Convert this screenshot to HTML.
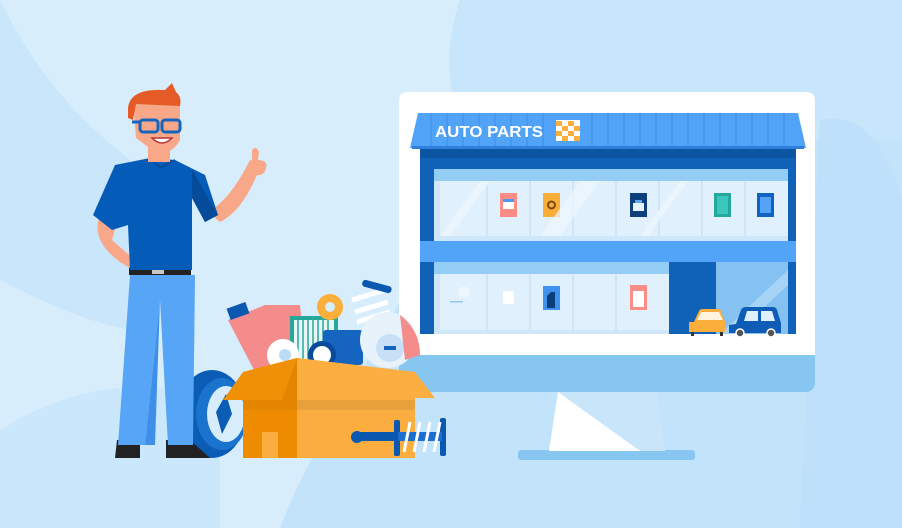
<!DOCTYPE html>
<html><head><meta charset="utf-8"><style>html,body{margin:0;padding:0;background:#d6ecfc}svg{display:block}</style></head><body>
<svg width="902" height="528" viewBox="0 0 902 528" xmlns="http://www.w3.org/2000/svg">
<rect width="902" height="528" fill="#d7edfc"/>
<path d="M460 0 C440 60 450 100 470 140 L902 140 L902 0Z" fill="#c8e6fb"/>
<path d="M470 140 L902 140 L902 528 L280 528 C320 420 420 300 470 140Z" fill="#c3e3fb"/>
<path d="M820 120 C870 110 890 160 902 200 L902 528 L800 528Z" fill="#bfe0fa"/>
<path d="M0 0 L0 280 C40 300 80 320 130 330 L130 160 C80 120 40 80 0 0Z" fill="#c9e6fb"/>
<path d="M0 430 C80 380 150 380 220 400 L220 528 L0 528Z" fill="#cbe7fb"/>
<!-- monitor -->
<rect x="518" y="450" width="177" height="10" rx="3" fill="#88c6f2"/>
<path d="M558 392 L657 392 L665 451 L549 451Z" fill="#c9e5fa"/>
<path d="M558 392 L640 451 L549 451Z" fill="#ffffff"/>
<rect x="399" y="92" width="416" height="300" rx="9" fill="#88c6f2"/>
<path d="M408 92 H806 Q815 92 815 101 V355 H399 V101 Q399 92 408 92Z" fill="#ffffff"/>
<!-- building -->
<rect x="420" y="145" width="376" height="189" fill="#1062b9"/>
<rect x="420" y="148" width="376" height="10" fill="#0c55a3"/>
<path d="M418 113 L798 113 L806 148 L410 148Z" fill="#51a3f8"/>
<g stroke="#3d8fe6" stroke-width="1">
<path d="M431 113V148M447 113V148M463 113V148M479 113V148M495 113V148M511 113V148M527 113V148M543 113V148M592 113V148M608 113V148M624 113V148M640 113V148M656 113V148M672 113V148M688 113V148M704 113V148M720 113V148M736 113V148M752 113V148M768 113V148M784 113V148"/>
</g>
<rect x="412" y="146" width="392" height="3" fill="#2f80dc"/>
<text x="435" y="137" font-family="Liberation Sans, sans-serif" font-weight="bold" font-size="16" textLength="108" lengthAdjust="spacingAndGlyphs" fill="#ffffff">AUTO PARTS</text>
<g>
<rect x="556" y="120" width="24" height="21" fill="#ffffff"/>
<path d="M556 121 h6 v5 h-6z M568 121 h6 v5 h-6z M562 126 h6 v5 h-6z M574 126 h6 v5 h-6z M556 131 h6 v5 h-6z M568 131 h6 v5 h-6z M562 136 h6 v5 h-6z M574 136 h6 v5 h-6z" fill="#fbae3c"/>
</g>
<rect x="434" y="169" width="354" height="72" fill="#cfe7fb"/>
<rect x="434" y="169" width="354" height="12" fill="#93ccf5"/>
<rect x="440" y="181" width="348" height="55" fill="#e0f0fd"/>
<g stroke="#c1dcf3" stroke-width="1"><path d="M487 181V236M530 181V236M573 181V236M616 181V236M659 181V236M702 181V236M745 181V236"/></g>
<rect x="500" y="193" width="17" height="24" fill="#fb8d86"/><rect x="503" y="201" width="11" height="8" fill="#fff"/><rect x="503" y="199" width="11" height="3" fill="#4a9cf2"/>
<rect x="543" y="193" width="17" height="24" fill="#fbad3a"/><circle cx="551.5" cy="205" r="3.5" fill="none" stroke="#7a4a10" stroke-width="2"/>
<rect x="630" y="193" width="17" height="24" fill="#0c3f7c"/><rect x="633" y="203" width="11" height="8" fill="#e8f2fd"/><rect x="635" y="200" width="7" height="3" fill="#5da8f3"/>
<rect x="714" y="193" width="17" height="24" fill="#23a89b"/><rect x="717" y="196" width="11" height="18" fill="#38c6bd"/>
<rect x="757" y="193" width="17" height="24" fill="#1262bf"/><rect x="760" y="197" width="11" height="16" fill="#54a3f6"/>
<rect x="420" y="241" width="376" height="21" fill="#52a4f8"/>
<rect x="434" y="262" width="235" height="72" fill="#cfe7fb"/>
<rect x="434" y="262" width="235" height="12" fill="#93ccf5"/>
<rect x="440" y="274" width="229" height="56" fill="#e0f0fd"/>
<g stroke="#c1dcf3" stroke-width="1"><path d="M487 274V330M530 274V330M573 274V330M616 274V330"/></g>
<rect x="503" y="291" width="11" height="13" rx="2" fill="#ffffff"/>
<rect x="458" y="287" width="12" height="10" rx="4" fill="#eef7fe"/><rect x="450" y="301" width="13" height="1.5" fill="#9ac6ea"/>
<rect x="543" y="286" width="17" height="24" fill="#3f93ef"/><path d="M547 296 l4 -4 h4 v16 h-8z" fill="#0b3f7a"/>
<rect x="630" y="285" width="17" height="25" fill="#fb8d86"/><rect x="633" y="291" width="11" height="16" fill="#fff"/>
<rect x="669" y="262" width="47" height="72" fill="#1062b9"/>
<rect x="716" y="262" width="72" height="72" fill="#86c2f1"/>
<path d="M720 334 L788 270 L788 285 L735 334Z" fill="#a6d4f7"/>
<path d="M440 236 L480 181 L490 181 L450 236Z M540 236 L580 181 L600 181 L560 236Z M640 236 L680 181 L688 181 L648 236Z" fill="#eef7fe" opacity=".7"/>
<!-- yellow car -->
<path d="M694 322 L699 311 Q700 309 703 309 H717 Q720 309 721 311 L725 322 V332 H689 V322Z" fill="#fbae3a"/>
<path d="M697 320 L701 312 H719 L723 320Z" fill="#fff4dc"/>
<rect x="691" y="332" width="3" height="4" fill="#333"/><rect x="720" y="332" width="3" height="4" fill="#333"/>
<!-- blue car -->
<path d="M729 325 L736 324 L741 310 Q742 307 746 307 H773 Q776 307 777 310 L781 323 V333 H729Z" fill="#0f5cb6"/>
<path d="M744 321 L747 311 H758 V321Z M761 311 H772 L775 321 H761Z" fill="#dff0fd"/>
<circle cx="740" cy="333" r="4" fill="#555" stroke="#fff" stroke-width="1.5"/><circle cx="771" cy="333" r="4" fill="#555" stroke="#fff" stroke-width="1.5"/>
<!-- wheel -->
<ellipse cx="212" cy="414" rx="34" ry="44" fill="#0a5cb4"/>
<ellipse cx="222" cy="414" rx="26" ry="36" fill="#1a73cc"/>
<ellipse cx="226" cy="414" rx="19" ry="28" fill="#d7edfc"/>
<path d="M226 394 L232 414 L222 434 L216 412Z" fill="#0a5cb4"/>
<!-- box contents -->
<path d="M228 320 L265 305 L300 305 L305 360 L255 372Z" fill="#f48c8c"/>
<rect x="228" y="305" width="20" height="12" fill="#0a58b0" transform="rotate(-20 238 311)"/>
<rect x="290" y="316" width="48" height="50" fill="#26a79b"/>
<rect x="294" y="320" width="40" height="44" fill="#e8f7f5"/>
<g stroke="#26a79b" stroke-width="1.5"><path d="M298 320V364M303 320V364M308 320V364M313 320V364M318 320V364M323 320V364M328 320V364"/></g>
<circle cx="330" cy="307" r="13" fill="#fbae3a"/><circle cx="330" cy="307" r="5" fill="#d7edfc"/>
<path d="M352 300 L385 290 M355 312 L388 302 M357 322 L390 312" stroke="#ffffff" stroke-width="5"/>
<rect x="362" y="283" width="30" height="7" rx="3" fill="#0a58b0" transform="rotate(15 377 286)"/>
<rect x="323" y="330" width="40" height="35" rx="3" fill="#1565c0"/>
<circle cx="322" cy="355" r="14" fill="#0a4a9c"/><circle cx="322" cy="355" r="9" fill="#ffffff"/>
<circle cx="283" cy="355" r="16" fill="#ffffff"/><circle cx="285" cy="355" r="6" fill="#bcdcf6"/>
<circle cx="388" cy="340" r="28" fill="#e8f2fb"/><circle cx="390" cy="348" r="14" fill="#c7e0f6"/><rect x="384" y="346" width="12" height="4" fill="#1565c0"/>
<path d="M400 315 Q420 330 420 355 L405 360Z" fill="#f48c8c"/>
<!-- box -->
<path d="M243 372 L297 358 L297 458 L243 458Z" fill="#ee8b00"/>
<path d="M297 358 L415 372 L415 458 L297 458Z" fill="#fbae3f"/>
<rect x="297" y="400" width="118" height="10" fill="#e8a03a"/>
<path d="M297 358 L243 372 L223 400 L282 400Z" fill="#f09007"/>
<path d="M297 358 L415 372 L435 398 L318 398Z" fill="#fcaf40"/>
<path d="M243 400 L282 400 L297 358 L297 410 L243 410Z" fill="#d97f00" opacity=".5"/>
<rect x="262" y="432" width="16" height="26" fill="#fbae3f"/>
<!-- shock absorber -->
<circle cx="357" cy="437" r="6" fill="#0a58b0"/><rect x="357" y="432" width="40" height="9" fill="#0a58b0"/>
<rect x="394" y="420" width="6" height="36" rx="2" fill="#0a58b0"/><rect x="440" y="418" width="6" height="38" rx="2" fill="#0a58b0"/>
<rect x="398" y="432" width="44" height="9" fill="#1a6fd0"/>
<g stroke="#ffffff" stroke-width="3"><path d="M404 452 L410 422M414 452 L420 422M424 452 L430 422M434 452 L440 422"/></g>
<!-- man -->
<path d="M117 440 L140 440 L140 458 L115 458Z" fill="#222"/>
<path d="M166 440 L190 440 L210 458 L166 458Z" fill="#222"/>
<path d="M130 275 L195 275 L193 445 L168 445 L160 300 L145 445 L118 445Z" fill="#56a5f6"/>
<path d="M160 300 L155 445 L145 445Z" fill="#3f8fe8"/>
<rect x="129" y="266" width="62" height="9" fill="#222"/><rect x="152" y="267" width="12" height="7" fill="#c8c8c8"/>
<path d="M208 212 Q230 200 250 160 L262 162 Q245 210 220 222Z" fill="#f8a888"/>
<path d="M252 150 Q256 145 259 152 L258 160 Q268 160 266 168 Q265 177 252 175Z" fill="#f8a888"/>
<path d="M100 215 Q90 240 120 262 L130 268 L137 262 L112 240 L118 218Z" fill="#f8a888"/>
<path d="M115 165 L150 158 L175 160 L205 175 L218 215 L205 222 L192 198 L192 270 L130 270 L128 225 L112 230 L93 215Z" fill="#055bb8"/>
<path d="M192 170 L218 215 L205 222 L192 198Z" fill="#044c9a"/>
<path d="M150 158 L160 168 L175 160" fill="none" stroke="#044c9a" stroke-width="2"/>
<rect x="148" y="140" width="22" height="22" fill="#f8a888"/>
<path d="M133 100 L180 100 L180 140 Q170 158 152 150 L136 138Z" fill="#f8a888"/>
<path d="M128 108 Q130 88 165 90 L172 83 L176 92 Q182 97 180 106 L136 104 L133 120 L128 118Z" fill="#e55b27"/>
<rect x="140" y="120" width="18" height="12" rx="3" fill="none" stroke="#1565c0" stroke-width="3"/>
<rect x="162" y="120" width="18" height="12" rx="3" fill="none" stroke="#1565c0" stroke-width="3"/>
<path d="M132 122 L140 122" stroke="#1565c0" stroke-width="3"/>
<path d="M152 138 Q162 148 172 138Z" fill="#ffffff" stroke="#b8322e" stroke-width="1.5"/>
</svg>
</body></html>
